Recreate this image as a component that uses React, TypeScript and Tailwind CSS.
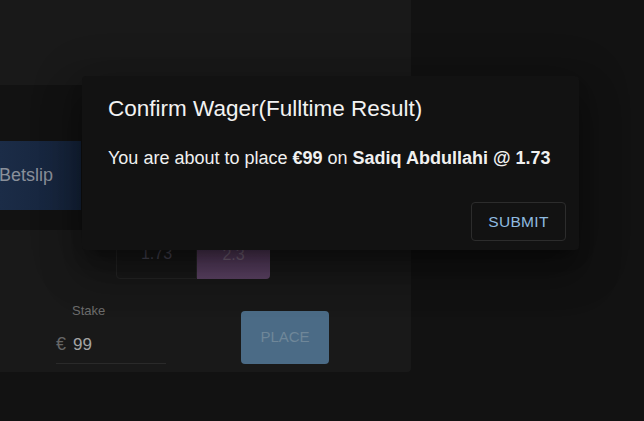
import React from 'react';

// Betslip panel sitting under a "confirm wager" dialog
const App: React.FC = () => {
  return (
    <div
      className="relative w-[644px] h-[421px] overflow-hidden bg-[#121212]"
      style={{ fontFamily: '"Liberation Sans", Arial, sans-serif' }}
    >
      {/* Background card (dimmed by the backdrop) */}
      <div className="w-[411px] h-[372px] bg-[#191919] rounded-br-[4px]">
        <div className="h-[85px]" />
        <div className="h-[145px] bg-[#121212] pt-[56px]">
          <div className="w-[81px] h-[69px] bg-gradient-to-r from-[#1b2c47] to-[#15233a] flex items-center">
            <span className="text-[18px] text-[#8a909a] -ml-[1px]">Betslip</span>
          </div>
        </div>

        {/* Odds */}
        <div className="flex ml-[116px] mt-[5px]">
          <div className="w-[81px] h-[44px] border border-[#262626] rounded-bl-[4px] flex items-end justify-center pb-[12px] text-[16px] text-[#4c4a5a]">
            1.73
          </div>
          <div className="w-[73px] h-[44px] bg-gradient-to-b from-[#55395c] to-[#5f4568] rounded-br-[4px] flex items-end justify-center pb-[12px] text-[16px] text-[#7c6a80]">
            2.3
          </div>
        </div>

        {/* Stake + place */}
        <div className="flex items-start mt-[24px]">
          <div className="w-[110px] ml-[56px]">
            <div className="h-[16px] pl-[16px] text-[13px] leading-[16px] text-[#6c6c6c]">Stake</div>
            <div className="h-[45px] border-b border-[#2a2a2a] flex items-center pt-[7px] gap-[7px]">
              <span className="text-[18px] text-[#666]">€</span>
              <span className="text-[17px] text-[#a4a4a4]">99</span>
            </div>
          </div>
          <div className="ml-[75px] mt-[8px] w-[88px] h-[53px] rounded-[4px] bg-[#4b6b86] flex items-center justify-center text-[15px] text-[#6f8799]">
            PLACE
          </div>
        </div>
      </div>

      {/* Dialog */}
      <div className="absolute left-[82px] top-[76px] w-[497px] h-[174px] bg-[#121212] rounded-[4px] shadow-[0_11px_15px_-7px_rgba(0,0,0,0.35),0_24px_38px_3px_rgba(0,0,0,0.25),0_9px_46px_8px_rgba(0,0,0,0.2)] pl-[26px] pr-[13px] pt-[17px] flex flex-col">
        <h2 className="text-[22.5px] leading-[32px] text-[#f2f2f2]">Confirm Wager(Fulltime Result)</h2>
        <p className="mt-[20px] text-[18px] leading-[26px] text-[#f0f0f0]">
          You are about to place <b>€99</b> on <b>Sadiq Abdullahi @ 1.73</b>
        </p>
        <div className="flex justify-end mt-[31px]">
          <button className="w-[95px] h-[39px] border border-[#2c2c2c] rounded-[4px] text-[15.5px] tracking-[0.3px] text-[#8fbbe0]">
            SUBMIT
          </button>
        </div>
      </div>
    </div>
  );
};

export default App;
